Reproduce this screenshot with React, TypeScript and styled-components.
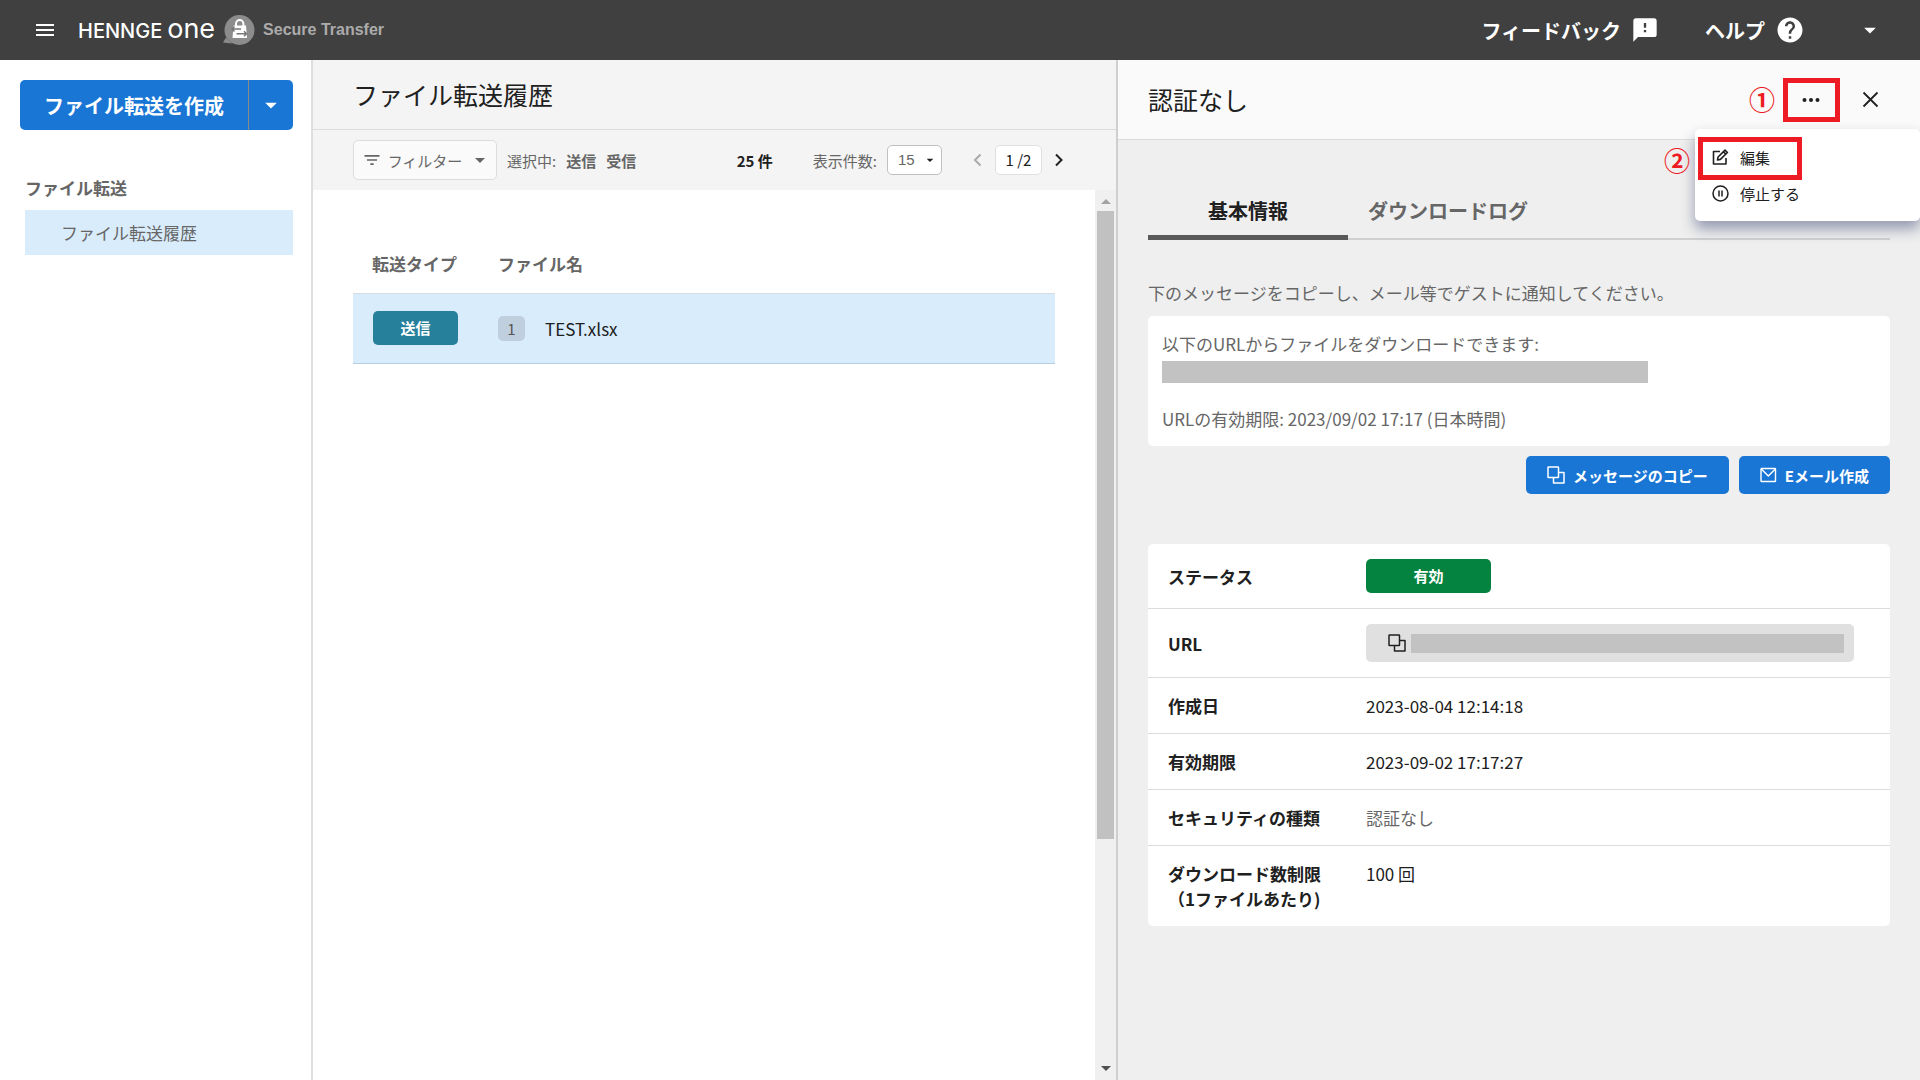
import React from "react";
import styled, { createGlobalStyle } from "styled-components";
import { MdArrowDropDown, MdFeedback, MdHelp, MdFilterList } from "react-icons/md";

const jp = `"Noto Sans CJK JP", "Noto Sans", sans-serif`;

const Global = createGlobalStyle`
  *, *::before, *::after { box-sizing: border-box; }
  body { margin: 0; font-family: ${jp}; font-size: 17px; line-height: 25px; color: #202020; background: #fff; }
  button, select, input { font: inherit; color: inherit; }
  button { cursor: pointer; border: 0; background: none; padding: 0; }
  h1, h2, p, ul { margin: 0; padding: 0; }
  svg { display: block; flex: none; }
`;

const Page = styled.div`
  height: 100vh;
  display: flex;
  flex-direction: column;
`;

const TopBar = styled.header`
  flex: none;
  height: 60px;
  padding: 0 36px;
  display: flex;
  align-items: center;
  background: #404040;
  color: #fff;
`;

const IconButton = styled.button`
  display: flex;
  align-items: center;
  justify-content: center;
`;

const Brand = styled.a`
  margin-left: 24px;
  display: flex;
  align-items: center;
  gap: 8px;
  color: #fff;
  text-decoration: none;
`;

const Wordmark = styled.span`
  display: flex;
  align-items: baseline;
  gap: 5px;
  font: 500 20px/30px Inter, sans-serif;
`;

const WordmarkOne = styled.span`
  font-size: 27px;
  font-weight: 400;
`;

const Product = styled.span`
  font: bold 16px/20px "Liberation Sans", Arial, sans-serif;
  color: #ababab;
`;

const TopActions = styled.nav`
  margin-left: auto;
  display: flex;
  align-items: center;
`;

const TopLink = styled.a`
  margin-right: 46px;
  display: flex;
  align-items: center;
  gap: 10px;
  color: #fff;
  font-size: 20px;
  font-weight: 700;
  text-decoration: none;
`;

const AccountButton = styled(IconButton)`
  margin-left: 5px;
`;

const Columns = styled.div`
  flex: 1;
  min-height: 0;
  display: grid;
  grid-template-columns: 313px minmax(0, 803fr) minmax(0, 804fr);
`;

const Sidebar = styled.aside`
  padding: 20px 18px 20px 20px;
  border-right: 2px solid #dedede;
`;

const SplitButton = styled.div`
  display: flex;
  height: 50px;
  border-radius: 5px;
  overflow: hidden;
  background: #1976d5;
  color: #fff;
`;

const CreateButton = styled.button`
  flex: 1;
  font-size: 20px;
  font-weight: 700;
  border-right: 1px solid #8a8a8a;
`;

const CreateMore = styled(IconButton)`
  width: 44px;
`;

const NavGroup = styled.h2`
  margin: 45px 0 10px 5px;
  font-size: 17px;
  font-weight: 700;
  color: #666;
`;

const NavItem = styled.a`
  display: block;
  margin-left: 5px;
  padding: 10px 36px;
  background: #d9ecfb;
  color: #666;
  text-decoration: none;
`;

const ListPane = styled.main`
  min-height: 0;
  display: flex;
  flex-direction: column;
`;

const ListTitle = styled.h1`
  height: 70px;
  padding: 0 40px;
  font-size: 25px;
  line-height: 68px;
  font-weight: 400;
  background: #f4f4f4;
  border-bottom: 1px solid #dcdcdc;
`;

const Toolbar = styled.div`
  height: 60px;
  padding: 0 52px 0 40px;
  display: flex;
  align-items: center;
  background: #f4f4f4;
  font-size: 15px;
  color: #666;
`;

const FilterButton = styled.button`
  width: 144px;
  height: 40px;
  padding: 0 4px 0 8px;
  display: flex;
  align-items: center;
  justify-content: space-between;
  background: #fafafa;
  border: 1px solid #dcdcdc;
  border-radius: 5px;
`;

const Selected = styled.p`
  margin-left: 10px;
  display: flex;
  gap: 10px;
`;

const Total = styled.p`
  margin-left: auto;
  font-weight: 700;
  color: #202020;
`;

const PerPage = styled.label`
  margin-left: 40px;
  display: flex;
  align-items: center;
  gap: 10px;
`;

const SelectBox = styled.span`
  display: grid;
  align-items: center;
  & > * { grid-area: 1 / 1; }
  & > svg { justify-self: end; margin-right: 4px; color: #202020; pointer-events: none; }
`;

const Select = styled.select`
  appearance: none;
  width: 55px;
  height: 30px;
  padding: 0 10px;
  background: #fff;
  border: 1px solid #c0c0c0;
  border-radius: 5px;
  font: 15px/20px "Liberation Sans", Arial, sans-serif;
`;

const Pager = styled.nav`
  margin-left: 31px;
  display: flex;
  align-items: center;
  gap: 12px;
`;

const PageNo = styled.span`
  width: 47px;
  height: 30px;
  line-height: 28px;
  text-align: center;
  white-space: nowrap;
  color: #202020;
  background: #fff;
  border: 1px solid #e0e0e0;
  border-radius: 5px;
`;

const ListBody = styled.div`
  flex: 1;
  min-height: 0;
  display: flex;
`;

const TableArea = styled.div`
  flex: 1;
  padding: 58px 40px 0;
`;

const FileTable = styled.table`
  width: 100%;
  border-collapse: separate;
  border-spacing: 0;
`;

const FileHead = styled.th<{ $w?: number }>`
  width: ${(p) => (p.$w ? `${p.$w}px` : "auto")};
  height: 45px;
  padding: 0 0 15px ${(p) => (p.$w ? 19 : 0)}px;
  text-align: left;
  font-weight: 700;
  color: #666;
`;

const FileCell = styled.td<{ $first?: boolean }>`
  height: 71px;
  padding: 0 0 1px ${(p) => (p.$first ? 20 : 0)}px;
  background: #d9ecfb;
  border-top: 1px solid #d6dde2;
  border-bottom: 1px solid #b8cfe2;
`;

const Badge = styled.span<{ $color: string; $w: number }>`
  display: block;
  width: ${(p) => p.$w}px;
  height: 34px;
  line-height: 34px;
  text-align: center;
  font-size: 15px;
  font-weight: 700;
  color: #fff;
  background: ${(p) => p.$color};
  border-radius: 5px;
`;

const FileName = styled.div`
  display: flex;
  align-items: center;
  gap: 20px;
`;

const Count = styled.span`
  width: 27px;
  height: 25px;
  text-align: center;
  font-size: 15px;
  color: #555;
  background: #bfcfdd;
  border-radius: 5px;
`;

const ScrollTrack = styled.div`
  width: 21px;
  padding: 9px 2px;
  display: flex;
  flex-direction: column;
  align-items: center;
  background: #f0f0f0;
`;

const ScrollThumb = styled.div`
  flex: 0 0 72%;
  width: 100%;
  margin: 7px 0 auto;
  background: #c1c1c1;
`;

const Detail = styled.section`
  position: relative;
  min-height: 0;
  border-left: 2px solid #cfcfcf;
  background: #efefef;
`;

const DetailHead = styled.header`
  height: 80px;
  padding: 0 41px 0 30px;
  display: flex;
  align-items: center;
  background: #fafafa;
  border-bottom: 1px solid #dcdcdc;
`;

const DetailTitle = styled.h2`
  flex: 1;
  font-size: 25px;
  font-weight: 400;
`;

const MoreButton = styled(IconButton)`
  width: 57px;
  height: 44px;
  margin-right: 23px;
`;

const DetailBody = styled.div`
  padding: 40px 30px;
`;

const Tabs = styled.div`
  display: flex;
  border-bottom: 2px solid #d0d0d0;
`;

const Tab = styled.button<{ $active?: boolean }>`
  height: 60px;
  min-width: ${(p) => (p.$active ? 200 : 0)}px;
  margin-bottom: -2px;
  padding: ${(p) => (p.$active ? 5 : 0)}px 20px 0;
  font-size: 20px;
  font-weight: 700;
  color: ${(p) => (p.$active ? "#202020" : "#666")};
  border-bottom: ${(p) => (p.$active ? "5px solid #595959" : "0")};
`;

const Lead = styled.p`
  margin: 40px 0 11px;
  color: #666;
`;

const MessageBox = styled.div`
  padding: 15px 14px;
  background: #fff;
  border-radius: 5px;
  color: #666;
`;

const MaskedLine = styled.div`
  width: 68%;
  height: 22px;
  margin: 5px 0 23px;
  background: #c2c2c2;
`;

const Actions = styled.div`
  margin: 10px 0 50px;
  display: flex;
  justify-content: flex-end;
  gap: 10px;
`;

const ActionButton = styled.button`
  height: 38px;
  padding: 0 21px;
  display: flex;
  align-items: center;
  gap: 8px;
  font-size: 15px;
  font-weight: 700;
  color: #fff;
  background: #1976d5;
  border-radius: 5px;
`;

const InfoTable = styled.table`
  width: 100%;
  border-spacing: 0;
  background: #fff;
  border-radius: 5px;
  tr:not(:last-child) > * { border-bottom: 1px solid #dcdcdc; }
`;

const InfoLabel = styled.th`
  width: 218px;
  padding: 15px 0 15px 20px;
  text-align: left;
  font-weight: 700;
`;

const InfoValue = styled.td<{ $muted?: boolean }>`
  padding: 15px 36px 15px 0;
  vertical-align: top;
  color: ${(p) => (p.$muted ? "#666" : "#202020")};
`;

const UrlBox = styled.div`
  height: 38px;
  padding: 0 10px 0 22px;
  display: flex;
  align-items: center;
  gap: 5px;
  background: #e0e0e0;
  border-radius: 5px;
`;

const MaskedUrl = styled.div`
  flex: 1;
  height: 19px;
  background: #c2c2c2;
`;

const Menu = styled.div`
  position: absolute;
  top: 69px;
  right: 0;
  width: 225px;
  height: 92px;
  padding: 10px 17px;
  background: #fff;
  border-radius: 5px;
  box-shadow: 0 8px 14px rgba(40, 50, 100, 0.45);
`;

const MenuItem = styled.button`
  width: 100%;
  height: 36px;
  display: flex;
  align-items: center;
  gap: 11px;
  font-size: 15px;
`;

const RedFrame = styled.div<{ $top: number; $right: number; $w: number; $h: number }>`
  position: absolute;
  top: ${(p) => p.$top}px;
  right: ${(p) => p.$right}px;
  width: ${(p) => p.$w}px;
  height: ${(p) => p.$h}px;
  border: 5px solid #ed1c24;
  pointer-events: none;
`;

const Step = styled.span<{ $top: number; $right: number }>`
  position: absolute;
  top: ${(p) => p.$top}px;
  right: ${(p) => p.$right}px;
  font-size: 26px;
  line-height: 26px;
  font-weight: 700;
  color: #ed1c24;
`;

const MenuIcon = () => (
  <svg width="18" height="14" viewBox="0 0 18 14" fill="#fff">
    <path d="M0 1h18v2H0zM0 6h18v2H0zM0 11h18v2H0z" />
  </svg>
);

const ProductIcon = () => (
  <svg width="32" height="32" viewBox="0 0 32 32">
    <circle cx="16.500" cy="16" r="15" fill="#8c8c8c" />
    <path d="M3 23.500L0 28.500l9 1z" fill="#8c8c8c" />
    <path d="M13 12V9.800a3.700 3.700 0 0 1 7.400 0V12" fill="none" stroke="#fff" strokeWidth="2" />
    <path d="M10.500 11.500h12.500l1 12.500H9.500z" fill="#fff" />
    <path d="M8.500 15h9.500M11.500 12.500L9 15l2.500 2.500M13.500 19.800h10M21 17.300l2.500 2.500-2.500 2.500" fill="none" stroke="#777" strokeWidth="1.500" />
  </svg>
);

const CopyIcon = () => (
  <svg width="18" height="18" viewBox="0 0 18 18" fill="none" stroke="currentColor" strokeWidth="1.500">
    <rect x="1" y="1" width="10.500" height="10.500" rx=".5" />
    <path d="M11.500 6.500H17V17H6.500v-5.500" strokeLinejoin="round" />
  </svg>
);

const MailIcon = () => (
  <svg width="17" height="17" viewBox="0 0 17 17" fill="none" stroke="currentColor" strokeWidth="1.400">
    <rect x="1" y="1.500" width="14.500" height="13" rx=".5" />
    <path d="M1.300 2l7 7 7-7" />
  </svg>
);

const EditIcon = () => (
  <svg width="17" height="17" viewBox="0 0 17 17" fill="none" stroke="currentColor" strokeWidth="1.600" strokeLinejoin="round">
    <path d="M8 2.500H1.500V15H14V9" />
    <path d="M5.500 11l.6-3L13 1.100l2.400 2.400-7 6.900zM11.400 2.700l2.400 2.400" />
  </svg>
);

const PauseIcon = () => (
  <svg width="17" height="17" viewBox="0 0 17 17" fill="none" stroke="currentColor" strokeWidth="1.500">
    <circle cx="8.500" cy="8.500" r="7.500" />
    <path d="M7 5.500v6M10 5.500v6" />
  </svg>
);

const DotsIcon = () => (
  <svg width="18" height="6" viewBox="0 0 18 6" fill="#202020">
    <circle cx="2.500" cy="3" r="2" /><circle cx="9" cy="3" r="2" /><circle cx="15.500" cy="3" r="2" />
  </svg>
);

const CloseIcon = () => (
  <svg width="17" height="17" viewBox="0 0 17 17" stroke="#202020" strokeWidth="1.800">
    <path d="M1.500 1.500l14 14M15.500 1.500l-14 14" />
  </svg>
);

const Chevron = ({ left }: { left?: boolean }) => (
  <svg width="10" height="14" viewBox="0 0 10 14" fill="none" stroke={left ? "#aaa" : "#202020"} strokeWidth="2">
    <path d={left ? "M7.500 1.500L2 7l5.500 5.500" : "M2 1.500L7.500 7 2 12.500"} />
  </svg>
);

const ScrollArrow = ({ down }: { down?: boolean }) => (
  <svg width="10" height="5" viewBox="0 0 10 5" fill={down ? "#505050" : "#a3a3a3"}>
    <path d={down ? "M0 0h10L5 5z" : "M0 5h10L5 0z"} />
  </svg>
);

export default function App() {
  return (
    <>
      <Global />
      <Page>
        <TopBar>
          <IconButton aria-label="メニュー"><MenuIcon /></IconButton>
          <Brand href="#">
            <Wordmark>HENNGE<WordmarkOne>one</WordmarkOne></Wordmark>
            <ProductIcon />
            <Product>Secure Transfer</Product>
          </Brand>
          <TopActions>
            <TopLink href="#">フィードバック<MdFeedback size={28} /></TopLink>
            <TopLink href="#">ヘルプ<MdHelp size={30} /></TopLink>
            <AccountButton aria-label="アカウント"><MdArrowDropDown size={28} /></AccountButton>
          </TopActions>
        </TopBar>
        <Columns>
          <Sidebar>
            <SplitButton>
              <CreateButton>ファイル転送を作成</CreateButton>
              <CreateMore aria-label="その他の作成方法"><MdArrowDropDown size={28} /></CreateMore>
            </SplitButton>
            <NavGroup>ファイル転送</NavGroup>
            <NavItem href="#">ファイル転送履歴</NavItem>
          </Sidebar>

          <ListPane>
            <ListTitle>ファイル転送履歴</ListTitle>
            <Toolbar>
              <FilterButton><MdFilterList size={20} />フィルター<MdArrowDropDown size={24} /></FilterButton>
              <Selected><span>選択中:</span><b>送信</b><b>受信</b></Selected>
              <Total>25 件</Total>
              <PerPage>
                表示件数:
                <SelectBox>
                  <Select defaultValue="15"><option>15</option><option>30</option></Select>
                  <MdArrowDropDown size={16} />
                </SelectBox>
              </PerPage>
              <Pager>
                <IconButton aria-label="前のページ"><Chevron left /></IconButton>
                <PageNo>1 /2</PageNo>
                <IconButton aria-label="次のページ"><Chevron /></IconButton>
              </Pager>
            </Toolbar>
            <ListBody>
              <TableArea>
                <FileTable>
                  <thead>
                    <tr><FileHead $w={145}>転送タイプ</FileHead><FileHead>ファイル名</FileHead></tr>
                  </thead>
                  <tbody>
                    <tr>
                      <FileCell $first><Badge $color="#267f9b" $w={85}>送信</Badge></FileCell>
                      <FileCell><FileName><Count>1</Count>TEST.xlsx</FileName></FileCell>
                    </tr>
                  </tbody>
                </FileTable>
              </TableArea>
              <ScrollTrack><ScrollArrow /><ScrollThumb /><ScrollArrow down /></ScrollTrack>
            </ListBody>
          </ListPane>

          <Detail>
            <DetailHead>
              <DetailTitle>認証なし</DetailTitle>
              <MoreButton aria-label="操作"><DotsIcon /></MoreButton>
              <IconButton aria-label="閉じる"><CloseIcon /></IconButton>
            </DetailHead>
            <DetailBody>
              <Tabs role="tablist">
                <Tab role="tab" aria-selected="true" $active>基本情報</Tab>
                <Tab role="tab" aria-selected="false">ダウンロードログ</Tab>
              </Tabs>
              <Lead>下のメッセージをコピーし、メール等でゲストに通知してください。</Lead>
              <MessageBox>
                <p>以下のURLからファイルをダウンロードできます:</p>
                <MaskedLine />
                <p>URLの有効期限: 2023/09/02 17:17 (日本時間)</p>
              </MessageBox>
              <Actions>
                <ActionButton><CopyIcon />メッセージのコピー</ActionButton>
                <ActionButton><MailIcon />Eメール作成</ActionButton>
              </Actions>
              <InfoTable>
                <tbody>
                  <tr><InfoLabel>ステータス</InfoLabel><InfoValue><Badge $color="#04823f" $w={125}>有効</Badge></InfoValue></tr>
                  <tr><InfoLabel>URL</InfoLabel><InfoValue><UrlBox><CopyIcon /><MaskedUrl /></UrlBox></InfoValue></tr>
                  <tr><InfoLabel>作成日</InfoLabel><InfoValue>2023-08-04 12:14:18</InfoValue></tr>
                  <tr><InfoLabel>有効期限</InfoLabel><InfoValue>2023-09-02 17:17:27</InfoValue></tr>
                  <tr><InfoLabel>セキュリティの種類</InfoLabel><InfoValue $muted>認証なし</InfoValue></tr>
                  <tr><InfoLabel>ダウンロード数制限<br />（1ファイルあたり)</InfoLabel><InfoValue>100 回</InfoValue></tr>
                </tbody>
              </InfoTable>
            </DetailBody>
            <Menu role="menu">
              <MenuItem role="menuitem"><EditIcon />編集</MenuItem>
              <MenuItem role="menuitem"><PauseIcon />停止する</MenuItem>
            </Menu>
            <Step $top={26} $right={145}>①</Step>
            <RedFrame $top={18} $right={80} $w={57} $h={44} />
            <Step $top={87} $right={230}>②</Step>
            <RedFrame $top={77} $right={118} $w={104} $h={43} />
          </Detail>
        </Columns>
      </Page>
    </>
  );
}
